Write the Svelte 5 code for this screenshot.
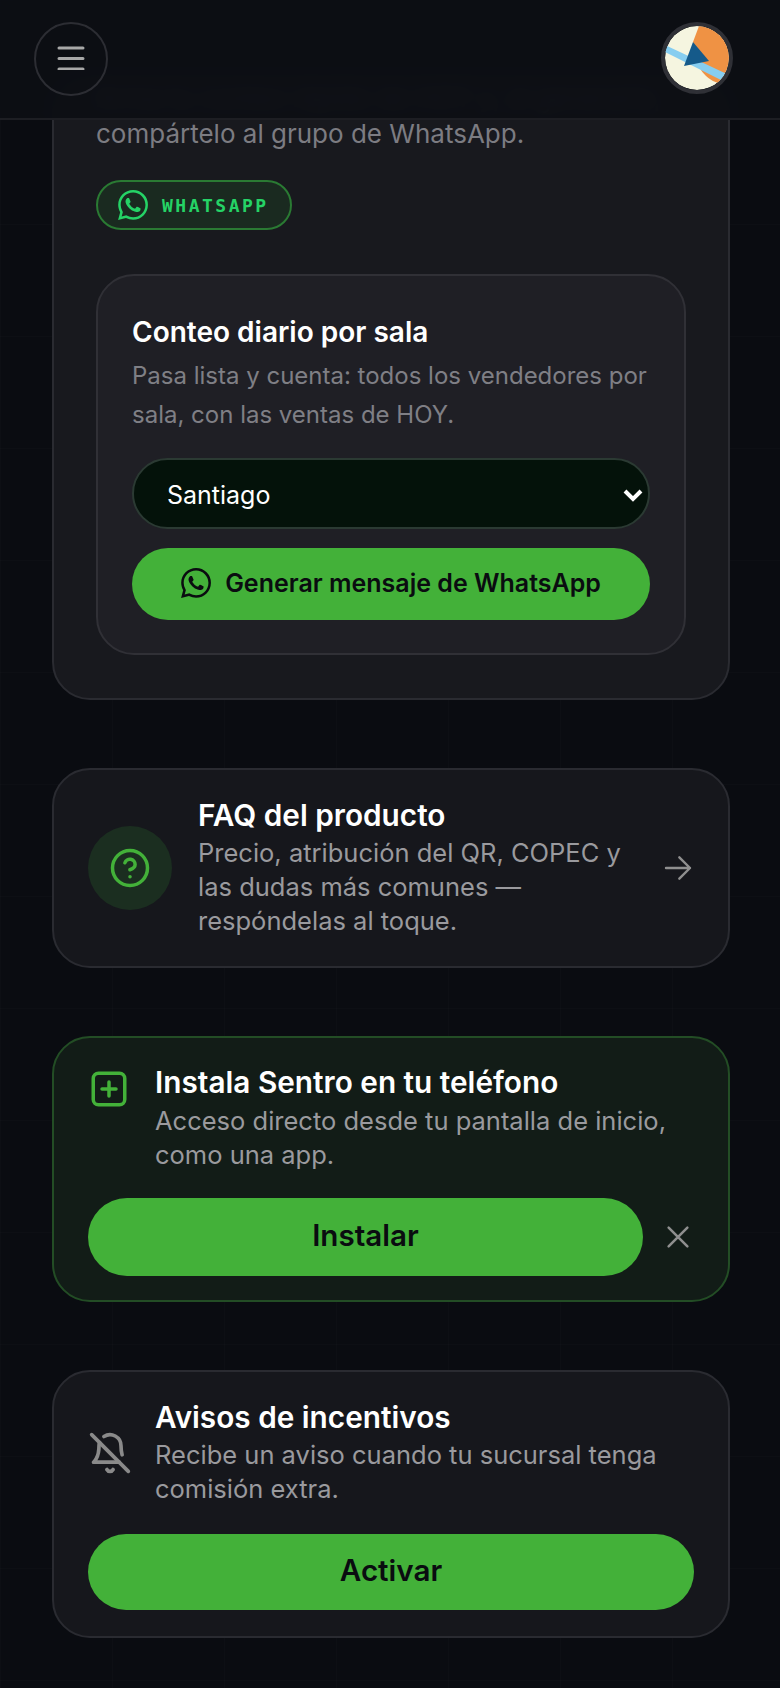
<script>
  const waPath = 'M17.472 14.382c-.297-.149-1.758-.867-2.03-.967-.273-.099-.471-.148-.67.15-.197.297-.767.966-.94 1.164-.173.199-.347.223-.644.075-.297-.15-1.255-.463-2.39-1.475-.883-.788-1.48-1.761-1.653-2.059-.173-.297-.018-.458.13-.606.134-.133.298-.347.446-.52.149-.174.198-.298.298-.497.099-.198.05-.371-.025-.52-.075-.149-.669-1.612-.916-2.207-.242-.579-.487-.5-.669-.51-.173-.008-.371-.01-.57-.01-.198 0-.52.074-.792.372-.272.297-1.04 1.016-1.04 2.479 0 1.462 1.065 2.875 1.213 3.074.149.198 2.096 3.2 5.077 4.487.709.306 1.262.489 1.694.625.712.227 1.36.195 1.871.118.571-.085 1.758-.719 2.006-1.413.248-.694.248-1.289.173-1.413-.074-.124-.272-.198-.57-.347m-5.421 7.403h-.004a9.87 9.87 0 01-5.031-1.378l-.361-.214-3.741.982.998-3.648-.235-.374a9.86 9.86 0 01-1.51-5.26c.001-5.45 4.436-9.884 9.888-9.884 2.64 0 5.122 1.03 6.988 2.898a9.825 9.825 0 012.893 6.994c-.003 5.45-4.437 9.884-9.885 9.884m8.413-18.297A11.815 11.815 0 0012.05 0C5.495 0 .16 5.335.157 11.892c0 2.096.547 4.142 1.588 5.945L.057 24l6.305-1.654a11.882 11.882 0 005.683 1.448h.005c6.554 0 11.89-5.335 11.893-11.893a11.821 11.821 0 00-3.48-8.413z';

  let sala = $state('Santiago');
  const salas = ['Santiago', 'Valparaíso', 'Concepción'];
</script>

<div class="page">
  <header class="topbar">
    <button class="menu" aria-label="Menú">
      <svg width="28" height="24" viewBox="0 0 28 24" fill="none" stroke="#a8a8a8" stroke-width="3" stroke-linecap="round">
        <path d="M2 2h24M2 12.500h24M2 23h24" />
      </svg>
    </button>
    <div class="avatar">
      <svg viewBox="0 0 64 64">
        <circle cx="32" cy="32" r="32" fill="#f5f5e0" />
        <path d="M34 0C50 1 64 14 64 32C64 40 60 50 53 57C46 55 40 50 36 44L28 16Z" fill="#ef9244" />
        <path d="M0 19L64 49L64 58L0 26Z" fill="#86cdf0" />
        <path d="M28 16L44 35L19 40Z" fill="#155a8a" />
      </svg>
    </div>
  </header>

  <main>
    <section class="card first">
      <p class="desc">Arma tu conteo rápido de HOY y, al generarlo,</p>
      <p class="desc">compártelo al grupo de WhatsApp.</p>
      <button class="pill">
        <svg width="30" height="30" viewBox="0 0 24 24" fill="#25d366"><path d={waPath} /></svg>
        <span>WHATSAPP</span>
      </button>

      <div class="inner">
        <h3>Conteo diario por sala</h3>
        <p class="desc small">Pasa lista y cuenta: todos los vendedores por sala, con las ventas de HOY.</p>
        <div class="select-wrap">
          <select bind:value={sala}>
            {#each salas as s}
              <option value={s}>{s}</option>
            {/each}
          </select>
          <svg class="chevron" width="20" height="13" viewBox="0 0 20 13" fill="none" stroke="#fff" stroke-width="4">
            <path d="M2 2l8 8 8-8" />
          </svg>
        </div>
        <button class="cta gen">
          <svg width="30" height="30" viewBox="0 0 24 24" fill="#0a0c10"><path d={waPath} /></svg>
          Generar mensaje de WhatsApp
        </button>
      </div>
    </section>

    <section class="card faq">
      <div class="faq-icon">
        <svg width="42" height="42" viewBox="0 0 24 24" fill="none" stroke="#43b139" stroke-width="2" stroke-linecap="round" stroke-linejoin="round">
          <circle cx="12" cy="12" r="10" />
          <path d="M9.090 9a3 3 0 0 1 5.830 1c0 2-3 3-3 3" />
          <path d="M12 17h.01" />
        </svg>
      </div>
      <div class="faq-text">
        <h3>FAQ del producto</h3>
        <p class="desc">Precio, atribución del QR, COPEC y las dudas más comunes — respóndelas al toque.</p>
      </div>
      <svg class="arrow" width="32" height="32" viewBox="0 0 24 24" fill="none" stroke="#8f8f8f" stroke-width="1.800" stroke-linecap="round" stroke-linejoin="round">
        <path d="M3 12h18M13 4l8 8-8 8" />
      </svg>
    </section>

    <section class="card install">
      <div class="row top">
        <svg class="ico" width="42" height="42" viewBox="0 0 24 24" fill="none" stroke="#43b139" stroke-width="2" stroke-linecap="round" stroke-linejoin="round">
          <rect x="3" y="3" width="18" height="18" rx="3" />
          <path d="M12 8v8M8 12h8" />
        </svg>
        <div>
          <h3>Instala Sentro en tu teléfono</h3>
          <p class="desc">Acceso directo desde tu pantalla de inicio, como una app.</p>
        </div>
      </div>
      <div class="actions">
        <button class="cta big">Instalar</button>
        <button class="close" aria-label="Cerrar">
          <svg width="30" height="30" viewBox="0 0 24 24" fill="none" stroke="#8f8f8f" stroke-width="2" stroke-linecap="round">
            <path d="M4.500 4.500l15 15M19.500 4.500l-15 15" />
          </svg>
        </button>
      </div>
    </section>

    <section class="card alerts">
      <div class="row">
        <svg class="ico" width="44" height="44" viewBox="0 0 24 24" fill="none" stroke="#8a8a8a" stroke-width="2" stroke-linecap="round" stroke-linejoin="round">
          <path d="M8.700 3A6 6 0 0 1 18 8a21.300 21.300 0 0 0 .6 5" />
          <path d="M17 17H3s3-2 3-9a4.670 4.670 0 0 1 .3-1.700" />
          <path d="M10.300 21a1.940 1.940 0 0 0 3.400 0" />
          <path d="m2 2 20 20" />
        </svg>
        <div>
          <h3>Avisos de incentivos</h3>
          <p class="desc">Recibe un aviso cuando tu sucursal tenga comisión extra.</p>
        </div>
      </div>
      <button class="cta wide">Activar</button>
    </section>
  </main>
</div>

<style>
  :global(body) {
    margin: 0;
    background: #0a0c11;
    font-family: Inter, "Liberation Sans", sans-serif;
  }

  .page {
    position: relative;
    height: 1688px;
    overflow: hidden;
    background-color: #0a0c11;
    background-image:
      linear-gradient(rgba(255, 255, 255, 0.012) 1px, transparent 1px),
      linear-gradient(90deg, rgba(255, 255, 255, 0.012) 1px, transparent 1px);
    background-size: 112px 112px;
  }

  .topbar {
    position: absolute;
    top: 0;
    left: 0;
    right: 0;
    z-index: 5;
    height: 120px;
    box-sizing: border-box;
    padding: 22px 47px 0 34px;
    display: flex;
    justify-content: space-between;
    align-items: flex-start;
    background: rgba(13, 15, 20, 0.95);
    backdrop-filter: blur(8px);
    border-bottom: 2px solid #1d1e23;
  }

  .menu {
    width: 74px;
    height: 74px;
    border-radius: 50%;
    border: 2px solid #2c2d33;
    background: transparent;
    padding: 0;
    display: flex;
    align-items: center;
    justify-content: center;
  }

  .menu svg {
    margin-bottom: 3px;
  }

  .avatar {
    width: 72px;
    height: 72px;
    border-radius: 50%;
    border: 4px solid #2f3036;
    overflow: hidden;
    display: flex;
    box-sizing: border-box;
  }

  .avatar svg {
    width: 100%;
    height: 100%;
  }

  main {
    padding: 78px 50px 0 52px;
    display: flex;
    flex-direction: column;
    gap: 68px;
  }

  .card {
    border: 2px solid #2a2b31;
    border-radius: 38px;
    background: #16171c;
    padding: 34px;
  }

  h3 {
    margin: 0 0 3px;
    color: #fff;
    font-size: 29.750px;
    line-height: 36px;
    font-weight: 600;
  }

  .desc {
    margin: 0;
    color: #9a9a9e;
    font-size: 25.500px;
    line-height: 34px;
  }

  .first {
    padding: 0 42px 43px;
    background: #18191e;
  }

  .first > .desc {
    color: #7c7c82;
    font-size: 26px;
    line-height: 36px;
    white-space: nowrap;
  }

  .pill {
    margin-top: 28px;
    height: 50px;
    width: 196px;
    box-sizing: border-box;
    border: 2px solid #2a7a33;
    border-radius: 25px;
    background: #1a2a20;
    padding: 0 0 0 20px;
    display: flex;
    align-items: center;
    gap: 14px;
    color: #25d366;
    font-family: "DejaVu Sans Mono", monospace;
    font-size: 18px;
    font-weight: 700;
    letter-spacing: 2.500px;
  }

  .inner {
    margin-top: 44px;
    border: 2px solid #303036;
    border-radius: 38px;
    background: #1f1f25;
    padding: 36px 34px 33px;
  }

  .inner h3 {
    margin: 0;
    font-size: 28px;
    line-height: 40px;
  }

  .desc.small {
    color: #7f7f85;
    font-size: 24px;
    line-height: 39px;
    margin-top: 4px;
  }

  .select-wrap {
    position: relative;
    margin-top: 24px;
  }

  select {
    display: block;
    width: 100%;
    height: 71px;
    box-sizing: border-box;
    appearance: none;
    border: 2px solid #2b3a33;
    border-radius: 36px;
    background-color: #04120a;
    color: #fff;
    font-family: inherit;
    font-size: 25px;
    padding: 2px 0 0 33px;
  }

  .chevron {
    position: absolute;
    right: 7px;
    top: 31px;
    pointer-events: none;
  }

  .cta {
    border: none;
    background: #43b139;
    color: #0a0c10;
    font-family: inherit;
    font-weight: 600;
    padding: 0;
  }

  .gen {
    width: 100%;
    height: 72px;
    margin-top: 19px;
    padding-bottom: 3px;
    border-radius: 36px;
    font-size: 25px;
    display: flex;
    align-items: center;
    justify-content: center;
    gap: 14px;
  }

  .faq {
    display: flex;
    align-items: center;
    gap: 26px;
    padding: 27px 34px 28px;
  }

  .faq-icon {
    flex: none;
    width: 84px;
    height: 84px;
    border-radius: 50%;
    background: #1b2e20;
    display: flex;
    align-items: center;
    justify-content: center;
  }

  .faq-text {
    flex: 1;
  }

  .arrow {
    flex: none;
  }

  .row {
    display: flex;
    align-items: center;
    gap: 23px;
  }

  .row.top {
    align-items: flex-start;
    gap: 25px;
  }

  .row.top .ico {
    margin-top: 4px;
  }

  .ico {
    flex: none;
  }

  .install {
    background: #121c17;
    border-color: #234d25;
    padding: 26px 34px 24px;
  }

  .install h3 {
    margin-bottom: 4px;
  }

  .alerts {
    padding: 27px 34px 26px;
  }

  .actions {
    margin-top: 26px;
    display: flex;
    align-items: center;
    gap: 20px;
  }

  .big {
    flex: 1;
    height: 78px;
    padding-bottom: 4px;
    border-radius: 39px;
    font-size: 29.600px;
  }

  .close {
    flex: none;
    width: 30px;
    height: 30px;
    background: none;
    border: none;
    padding: 0;
    margin-right: 1px;
  }

  .wide {
    display: block;
    width: 100%;
    height: 76px;
    padding-bottom: 4px;
    margin-top: 28px;
    border-radius: 38px;
    font-size: 29.600px;
  }
</style>
